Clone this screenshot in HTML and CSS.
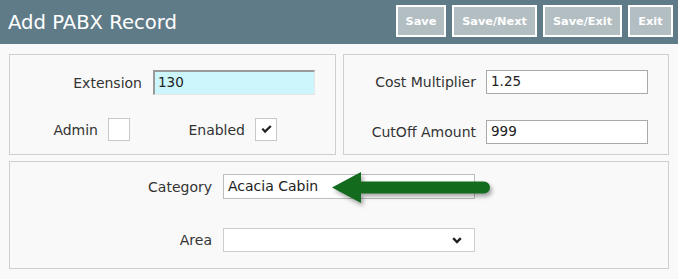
FILE: index.html
```html
<!DOCTYPE html>
<html>
<head>
<meta charset="utf-8">
<link rel="stylesheet" href="styles.css">
</head>
<body>
<header class="topbar">
  <h1 class="title">Add PABX Record</h1>
  <div class="actions">
    <button class="btn">Save</button>
    <button class="btn">Save/Next</button>
    <button class="btn">Save/Exit</button>
    <button class="btn">Exit</button>
  </div>
</header>
<main class="content">
  <div class="row-top">
    <section class="panel panel-a">
      <div class="field">
        <label class="lbl lbl-a">Extension</label>
        <div class="input input-focus">130</div>
      </div>
      <div class="checks">
        <label class="lbl lbl-admin">Admin</label>
        <div class="check"></div>
        <label class="lbl lbl-enabled">Enabled</label>
        <div class="check">
          <svg width="11" height="9" viewBox="0 0 11 9"><path d="M0.5 4.2 L2.2 3 L4 5 L9 0.3 L10.6 1.8 L4 8.2 Z" fill="#222"/></svg>
        </div>
      </div>
    </section>
    <section class="panel panel-b">
      <div class="field">
        <label class="lbl lbl-b">Cost Multiplier</label>
        <div class="input input-b">1.25</div>
      </div>
      <div class="field field-b2">
        <label class="lbl lbl-b">CutOff Amount</label>
        <div class="input input-b">999</div>
      </div>
    </section>
  </div>
  <section class="panel panel-c">
    <div class="field">
      <label class="lbl lbl-c">Category</label>
      <div class="select select-cat">Acacia Cabin</div>
    </div>
    <div class="field field-c2">
      <label class="lbl lbl-c">Area</label>
      <div class="select select-area">
        <svg class="chev" width="10" height="7" viewBox="0 0 10 7"><path d="M1.2 1.2 L5 5 L8.8 1.2" fill="none" stroke="#222" stroke-width="2.4"/></svg>
      </div>
    </div>
    <svg class="arrow" width="175" height="45" viewBox="0 0 175 45">
      <path d="M6 19.5 L35 4 L35 13.5 L158 13.5 A6 6 0 0 1 158 25.5 L35 25.5 L35 35 Z" fill="#136b1e"/>
    </svg>
  </section>
</main>
</body>
</html>
```
FILE: styles.css
```css
* { box-sizing: border-box; }
html, body { margin: 0; padding: 0; }
body {
  width: 678px;
  height: 279px;
  background: #f9f9f9;
  font-family: "DejaVu Sans", Verdana, sans-serif;
  color: #333;
  overflow: hidden;
}
.topbar {
  height: 44px;
  background: #5f7b88;
  display: flex;
  align-items: flex-start;
  justify-content: space-between;
  padding: 5px 5px 0 8px;
}
.title {
  margin: 5px 0 0 0;
  font-size: 19.6px;
  font-weight: normal;
  color: #fff;
  line-height: 26px;
}
.actions { display: flex; gap: 6px; }
.btn {
  height: 32px;
  border: 2px solid #fff;
  background: #b3bec2;
  color: #fff;
  font-family: "DejaVu Sans", Verdana, sans-serif;
  font-weight: bold;
  font-size: 11.3px;
  padding: 0;
}
.btn:nth-child(1) { width: 50px; }
.btn:nth-child(2) { width: 85px; }
.btn:nth-child(3) { width: 79px; }
.btn:nth-child(4) { width: 45px; }

.content { padding: 10px 9px 0 9px; }
.row-top {
  display: grid;
  grid-template-columns: 327px 326px;
  gap: 7px;
}
.panel {
  border: 1px solid #cfcfcf;
  background: #f9f9f9;
}
.panel-a, .panel-b { height: 101px; padding-top: 15px; }
.field { display: flex; align-items: center; }
.lbl {
  font-size: 14px;
  text-align: right;
  flex: none;
  color: #333;
}
.lbl-a { width: 132px; margin-right: 11px; }
.input {
  height: 25px;
  width: 162px;
  font-size: 13.5px;
  line-height: 21px;
  padding-left: 4px;
  background: #fff;
  border: 1px solid #a9a9a9;
  color: #222;
}
.input-focus {
  background: #ccf6fb;
  border-top: 2px solid #9a9a9a;
  border-left: 2px solid #9a9a9a;
  border-right: 1px solid #e6e6e6;
  border-bottom: 1px solid #e6e6e6;
  padding-left: 3px;
}
.checks {
  display: flex;
  align-items: center;
  margin-top: 23px;
}
.lbl-admin { width: 88px; margin-right: 10px; }
.lbl-enabled { width: 115px; margin-right: 10px; }
.check {
  width: 22px;
  height: 23px;
  background: #fff;
  border: 1px solid #c8c8c8;
  display: flex;
  align-items: center;
  justify-content: center;
}
.lbl-b { width: 132px; margin-right: 10px; }
.input-b { height: 24px; }
.field-b2 { margin-top: 26px; }

.panel-c {
  margin-top: 6px;
  height: 108px;
  padding-top: 12px;
  position: relative;
}
.lbl-c { width: 202px; margin-right: 11px; }
.select {
  width: 252px;
  height: 25px;
  background: #fff;
  border: 1px solid #bdbdbd;
  font-size: 14px;
  line-height: 23px;
  padding-left: 4px;
  color: #222;
  display: flex;
  align-items: center;
}
.select-area {
  border: 1.5px solid #cdcdcd;
  height: 24px;
  justify-content: flex-end;
  padding-right: 12px;
}
.field-c2 { margin-top: 29px; }
.arrow {
  position: absolute;
  left: 316px;
  top: 6px;
  filter: drop-shadow(2px 3px 2px rgba(0,0,0,0.35));
}
```
